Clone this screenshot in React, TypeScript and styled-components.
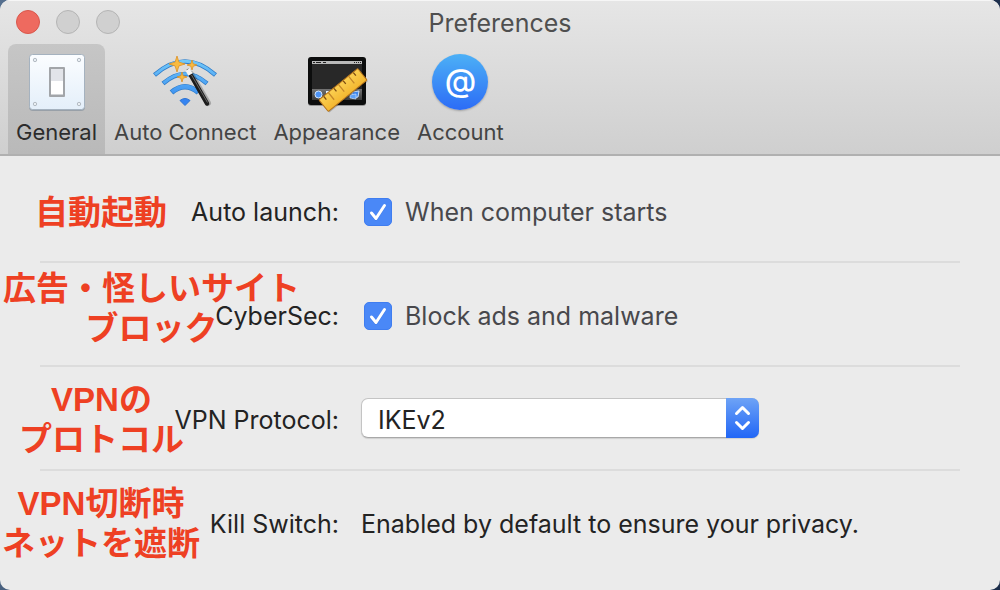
import React, { useState } from "react";
import styled, { createGlobalStyle, css } from "styled-components";

const GlobalStyle = createGlobalStyle`
  *, *::before, *::after { box-sizing: border-box; }
  body {
    margin: 0;
    background: linear-gradient(100deg, #56708f 0%, #2b3f5c 30%, #1b2d4a 100%);
    font-family: Inter, Roboto, "Noto Sans CJK JP", sans-serif;
    -webkit-font-smoothing: antialiased;
  }
`;

const Window = styled.main`
  min-height: 100vh;
  border-radius: 10px;
  overflow: hidden;
  background: #ebebeb;
  color: #232323;
`;

const Header = styled.header`
  background: linear-gradient(#e6e6e6, #cfcfcf);
  border-bottom: 2px solid #b0b0b0;
  box-shadow: inset 0 1px 0 #f6f6f6;
`;

const TitleBar = styled.div`
  display: grid;
  grid-template-columns: 1fr auto 1fr;
  align-items: center;
  height: 44px;
  padding: 0 16px;
`;

const WindowControls = styled.div`
  display: flex;
  gap: 16px;
`;

const ControlDot = styled.button<{ $active?: boolean }>`
  width: 24px;
  height: 24px;
  padding: 0;
  border-radius: 50%;
  border: 1px solid ${(p) => (p.$active ? "#d9574c" : "#b4b4b4")};
  background: ${(p) => (p.$active ? "#ee6a5f" : "#d0d0d0")};
`;

const Title = styled.h1`
  margin: 0;
  padding-top: 2px;
  font-size: 25px;
  font-weight: 400;
  line-height: 32px;
  color: #4f4f4f;
`;

const Toolbar = styled.nav`
  display: flex;
  gap: 1px;
  padding: 0 8px;
`;

const Tab = styled.button<{ $selected?: boolean }>`
  display: flex;
  flex-direction: column;
  align-items: center;
  height: 110px;
  padding: 6px 8px 0;
  border: 0;
  border-radius: 8px 8px 0 0;
  background: ${(p) => (p.$selected ? "linear-gradient(#c6c6c6, #b9b9b9)" : "transparent")};
  color: ${(p) => (p.$selected ? "#2c2c2c" : "#444")};
  font: inherit;
  font-size: 22px;
  line-height: 36px;
  white-space: nowrap;

  svg { display: block; }
`;

const Settings = styled.form`
  padding: 5px 40px 0;
`;

const Row = styled.div`
  position: relative;
  display: grid;
  grid-template-columns: 299px 1fr;
  column-gap: 22px;
  align-items: center;
  height: 104px;
  padding-bottom: 2px;

  & + &::before {
    content: "";
    position: absolute;
    top: -4px;
    left: 0;
    right: 0;
    height: 2px;
    background: #dcdcdc;
  }
`;

const labelText = css`
  font-size: 25px;
  line-height: 32px;
`;

const RowLabel = styled.label`
  ${labelText}
  justify-self: end;
  white-space: nowrap;
`;

const RowText = styled.output`
  ${labelText}
`;

const CheckLabel = styled.label`
  ${labelText}
  display: flex;
  align-items: center;
  gap: 13px;
  padding-left: 3px;
  color: #48484c;
`;

const CheckBox = styled.span`
  position: relative;
  width: 28px;
  height: 28px;

  svg {
    position: absolute;
    inset: 0;
    pointer-events: none;
  }
`;

const CheckInput = styled.input`
  appearance: none;
  display: block;
  width: 28px;
  height: 28px;
  margin: 0;
  border: 1px solid #b8b8b8;
  border-radius: 5px;
  background: #fff;

  &:checked {
    border-color: #3f7df0;
    background: #4a88f7;
  }
  &:not(:checked) + svg { display: none; }
`;

const SelectWrap = styled.div`
  position: relative;
  width: 398px;
  max-width: 100%;
  height: 40px;
  margin-bottom: 4px;

  svg {
    position: absolute;
    top: 0;
    right: 0;
    pointer-events: none;
  }
`;

const Select = styled.select`
  ${labelText}
  appearance: none;
  width: 100%;
  height: 40px;
  padding: 4px 40px 0 16px;
  border: 1px solid #c4c4c4;
  border-bottom-color: #a8a8a8;
  border-radius: 7px;
  background: #fff;
  box-shadow: 0 1px 1px rgba(0, 0, 0, 0.12);
  color: #232323;
  font-family: inherit;
`;

const Note = styled.p<{ $left: number; $top: number }>`
  position: absolute;
  left: ${(p) => p.$left}px;
  top: ${(p) => p.$top}px;
  margin: 0;
  font-family: "Liberation Sans", "Noto Sans CJK JP", sans-serif;
  font-size: 33px;
  font-weight: 700;
  line-height: 40px;
  text-align: center;
  white-space: nowrap;
  color: #ee4023;
  pointer-events: none;
`;

const AtBadge = styled.span`
  display: flex;
  align-items: center;
  justify-content: center;
  width: 56px;
  height: 56px;
  margin: 4px;
  border-radius: 50%;
  background: linear-gradient(#4cb0f6, #2c6cf6);
  box-shadow: 0 1px 2px rgba(0, 0, 0, 0.25);
  color: #fff;
  font-size: 32px;
  font-weight: 500;
  line-height: 52px;
  padding-bottom: 3px;
`;

function SwitchIcon() {
  return (
    <svg width="64" height="64" viewBox="0 0 64 64" aria-hidden="true">
      <defs>
        <linearGradient id="plate" x1="0" y1="0" x2="0" y2="1">
          <stop offset="0" stopColor="#fbfdff" />
          <stop offset="1" stopColor="#e4effa" />
        </linearGradient>
      </defs>
      <rect x="4" y="5" width="56" height="56" rx="4" fill="#7f8c99" opacity=".6" />
      <rect x="4.500" y="4.500" width="55" height="55" rx="3" fill="url(#plate)" stroke="#a5b2bf" />
      {[[10, 10], [54, 10], [10, 54], [54, 54]].map(([x, y]) => (
        <circle key={`${x}-${y}`} cx={x} cy={y} r="1.700" fill="#e9eef3" stroke="#b4bcc4" />
      ))}
      <rect x="24" y="17" width="16" height="30" rx="1" fill="#a2a5a9" />
      <rect x="26" y="19" width="12" height="13" fill="#e2e4e9" />
      <rect x="26" y="31" width="12" height="13" fill="#fff" />
      <rect x="26" y="44" width="12" height="1" fill="#d0d2d5" />
    </svg>
  );
}

const spark = (x: number, y: number, r: number) => {
  const k = r * 0.24;
  return `M${x} ${y - r}L${x + k} ${y - k}L${x + r} ${y}L${x + k} ${y + k}L${x} ${y + r}L${x - k} ${y + k}L${x - r} ${y}L${x - k} ${y - k}Z`;
};

function WandIcon() {
  return (
    <svg width="66" height="64" viewBox="0 0 66 64" aria-hidden="true">
      <defs>
        <linearGradient id="wave" gradientUnits="userSpaceOnUse" x1="0" y1="10" x2="0" y2="56">
          <stop offset="0" stopColor="#72c9f8" />
          <stop offset="1" stopColor="#2e82f0" />
        </linearGradient>
      </defs>
      <g fill="none" strokeWidth="4.500">
        <g stroke="#2f7cc9">
          <path d="M2.500 25Q33-2 63.500 25" />
          <path d="M11 33.500Q33 14.500 55 33.500" />
          <path d="M19.500 42.500Q33 31 46.500 42.500" strokeWidth="5.500" />
        </g>
        <g stroke="url(#wave)" strokeWidth="3">
          <path d="M3 24.600Q33-2 63 24.600" />
          <path d="M11.500 33.100Q33 14.500 54.500 33.100" />
          <path d="M20 42.100Q33 31 46 42.100" strokeWidth="4" />
        </g>
      </g>
      <path d="M28 50.500Q33 46.500 38 50.500L33 55.500Z" fill="#3584f1" stroke="#2b73d4" />
      <path d="M39 24L56 53" stroke="#000" strokeOpacity=".22" strokeWidth="6" strokeLinecap="round" />
      <path d="M36.500 21L55 53.500" stroke="#1c1c1c" strokeWidth="4.500" strokeLinecap="round" />
      <path d="M39.500 25L55.500 52.500" stroke="#666" strokeWidth="1" />
      <path d="M35.500 19.500L38.500 24.500" stroke="#f3f3f3" strokeWidth="5" />
      <g fill="#f9bb40" stroke="#dc9228" strokeWidth=".8">
        <path d={spark(25, 14, 8)} />
        <path d={spark(40, 15, 5)} />
        <path d={spark(30, 27, 5)} />
      </g>
    </svg>
  );
}

function DesktopRulerIcon() {
  return (
    <svg width="64" height="64" viewBox="0 0 64 64" aria-hidden="true">
      <defs>
        <linearGradient id="dock" x1="0" y1="0" x2="0" y2="1">
          <stop offset="0" stopColor="#747474" />
          <stop offset="1" stopColor="#3b3b3b" />
        </linearGradient>
        <linearGradient id="ruler" x1="0" y1="0" x2="0" y2="1">
          <stop offset="0" stopColor="#fbd052" />
          <stop offset="1" stopColor="#f3b62f" />
        </linearGradient>
      </defs>
      <rect x="3" y="8" width="58" height="48" rx="3" fill="#000" opacity=".3" />
      <rect x="3" y="7" width="58" height="48" rx="3" fill="#0c0d0d" />
      <rect x="7" y="11" width="50" height="38" fill="#282828" />
      <rect x="7" y="11" width="50" height="3" fill="#b9b9b9" />
      <path d="M8 12.500h2M11 12.500h5M18 12.500h3M49 12.500h1M51 12.500h1M53 12.500h1M55 12.500h1" stroke="#222" />
      <rect x="7" y="39" width="50" height="11" fill="url(#dock)" />
      <circle cx="13.500" cy="44.500" r="3.500" fill="#4d94f7" stroke="#d8eaff" />
      <path d="M21 41h4l-4 4z" fill="#e2effb" />
      <path d="M47 42l7-1-1 6-6 1z" fill="#3f86ee" stroke="#c7defa" />
      <path d="M45 45l6-1v5l-6-1z" fill="#5ca0f8" stroke="#d5e7fc" strokeWidth=".6" />
      <g transform="translate(38 40) rotate(-39)">
        <rect x="-25" y="-6" width="50" height="15" rx="1" fill="#000" opacity=".2" />
        <rect x="-25" y="-7.500" width="50" height="15" rx="1" fill="url(#ruler)" stroke="#b4721b" />
        <path d="M-19-7v4M-6-7v4M6-7v4M19-7v4" stroke="#7d4c12" strokeWidth="1.300" />
        <path d="M-13-7v9M0-7v9M13-7v9" stroke="#c58729" strokeWidth="1.300" />
      </g>
    </svg>
  );
}

function CheckMark() {
  return (
    <svg width="28" height="28" viewBox="0 0 28 28" aria-hidden="true">
      <path d="M7.500 16L12 21L20.500 8" fill="none" stroke="#2c67cc" strokeOpacity=".5" strokeWidth="3" strokeLinecap="round" strokeLinejoin="round" />
      <path d="M7.500 15L12 20.500L20.500 7.500" fill="none" stroke="#fff" strokeWidth="3" strokeLinecap="round" strokeLinejoin="round" />
    </svg>
  );
}

function Stepper() {
  return (
    <svg width="33" height="40" viewBox="0 0 33 40" aria-hidden="true">
      <defs>
        <linearGradient id="step" x1="0" y1="0" x2="0" y2="1">
          <stop offset="0" stopColor="#6ea3f6" />
          <stop offset="1" stopColor="#2166f6" />
        </linearGradient>
      </defs>
      <path d="M0 0H26A7 7 0 0 1 33 7V33A7 7 0 0 1 26 40H0Z" fill="url(#step)" />
      <path d="M10.500 15.500L16.500 9.500L22.500 15.500M10.500 24.500L16.500 30.500L22.500 24.500" fill="none" stroke="#fff" strokeWidth="3" strokeLinecap="round" strokeLinejoin="round" />
    </svg>
  );
}

const tabs = [
  { name: "General", icon: <SwitchIcon /> },
  { name: "Auto Connect", icon: <WandIcon /> },
  { name: "Appearance", icon: <DesktopRulerIcon /> },
  { name: "Account", icon: <AtBadge aria-hidden="true">@</AtBadge> },
];

export default function App() {
  const [selected, setSelected] = useState("General");
  return (
    <>
      <GlobalStyle />
      <Window>
        <Header>
          <TitleBar>
            <WindowControls>
              <ControlDot $active aria-label="Close" />
              <ControlDot aria-label="Minimize" />
              <ControlDot aria-label="Zoom" />
            </WindowControls>
            <Title>Preferences</Title>
          </TitleBar>
          <Toolbar>
            {tabs.map((t) => (
              <Tab key={t.name} $selected={t.name === selected} onClick={() => setSelected(t.name)}>
                {t.icon}
                {t.name}
              </Tab>
            ))}
          </Toolbar>
        </Header>
        <Settings>
          <Row>
            <RowLabel htmlFor="launch">Auto launch:</RowLabel>
            <CheckLabel>
              <CheckBox>
                <CheckInput id="launch" type="checkbox" defaultChecked />
                <CheckMark />
              </CheckBox>
              When computer starts
            </CheckLabel>
            <Note $left={-5} $top={32}>自動起動</Note>
          </Row>
          <Row>
            <RowLabel htmlFor="cybersec">CyberSec:</RowLabel>
            <CheckLabel>
              <CheckBox>
                <CheckInput id="cybersec" type="checkbox" defaultChecked />
                <CheckMark />
              </CheckBox>
              Block ads and malware
            </CheckLabel>
            <Note $left={-37} $top={4}>
              広告・怪しいサイト
              <br />
              ブロック
            </Note>
          </Row>
          <Row>
            <RowLabel htmlFor="protocol">VPN Protocol:</RowLabel>
            <SelectWrap>
              <Select id="protocol" defaultValue="IKEv2">
                <option>IKEv2</option>
                <option>OpenVPN</option>
              </Select>
              <Stepper />
            </SelectWrap>
            <Note $left={-21} $top={11}>
              VPNの
              <br />
              プロトコル
            </Note>
          </Row>
          <Row>
            <RowLabel htmlFor="killswitch">Kill Switch:</RowLabel>
            <RowText id="killswitch">Enabled by default to ensure your privacy.</RowText>
            <Note $left={-38} $top={11}>
              VPN切断時
              <br />
              ネットを遮断
            </Note>
          </Row>
        </Settings>
      </Window>
    </>
  );
}
